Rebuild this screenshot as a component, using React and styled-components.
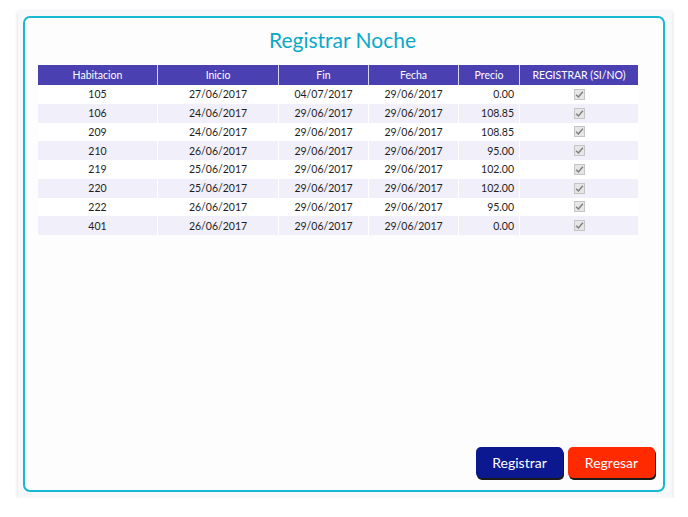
import React from "react";
import styled, { createGlobalStyle } from "styled-components";

const Global = createGlobalStyle`
  html, body { margin: 0; padding: 0; background: #ffffff; }
  body { font-family: Lato, "Open Sans", sans-serif; }
`;

const Page = styled.div`
  padding: 11px 0 0 18px;
`;

const Panel = styled.div`
  width: 654px;
  height: 487px;
  box-sizing: border-box;
  padding: 5px 7px 6px 5px;
  background: #f8f7f9;
  box-shadow: 0 1px 4px rgba(0, 0, 0, 0.16);
`;

const Frame = styled.div`
  height: 100%;
  box-sizing: border-box;
  border: 2px solid #16b8d2;
  border-radius: 7px;
  background: #fdfdfe;
  display: flex;
  flex-direction: column;
  padding: 0 8px 12px 13px;
`;

const Title = styled.h1`
  margin: 0;
  height: 47px;
  box-sizing: border-box;
  display: flex;
  align-items: center;
  justify-content: center;
  padding: 0 8px 5px 0;
  font-family: Lato, "Open Sans", sans-serif;
  font-weight: 400;
  font-size: 21px;
  color: #0aa9c9;
`;

const Table = styled.div`
  width: 600px;
  display: grid;
  grid-template-columns: 119px 121px 90px 90px 61px 119px;
  font-size: 10.5px;
`;

const HeadCell = styled.div`
  height: 20px;
  display: flex;
  align-items: center;
  justify-content: center;
  background: #4a40b2;
  color: #ffffff;
  border-left: ${(p) => (p.$first ? "none" : "1px solid #d8d6f0")};
`;

const Cell = styled.div`
  height: 18.75px;
  display: flex;
  align-items: center;
  justify-content: ${(p) => (p.$right ? "flex-end" : "center")};
  padding-right: ${(p) => (p.$right ? "5px" : "0")};
  background: ${(p) => (p.$alt ? "#f0effa" : "#ffffff")};
  border-left: ${(p) => (p.$first ? "none" : "1px solid #ffffff")};
  color: #1e1e1e;
`;

const Check = styled.span`
  width: 11px;
  height: 11px;
  box-sizing: border-box;
  border: 1px solid #c4c4c4;
  background: #e6e6e6;
  display: flex;
  align-items: center;
  justify-content: center;
`;

const Spacer = styled.div`
  flex: 1;
`;

const Buttons = styled.div`
  display: flex;
  justify-content: flex-end;
  gap: 5px;
`;

const Button = styled.button`
  width: 87px;
  height: 31px;
  border: none;
  border-radius: 5px;
  background: ${(p) => p.$bg};
  color: #ffffff;
  font-family: Lato, "Open Sans", sans-serif;
  font-size: 14px;
  box-shadow: 1px 2px 0 #1a1a1a;
  cursor: pointer;
`;

const rows = [
  ["105", "27/06/2017", "04/07/2017", "29/06/2017", "0.00"],
  ["106", "24/06/2017", "29/06/2017", "29/06/2017", "108.85"],
  ["209", "24/06/2017", "29/06/2017", "29/06/2017", "108.85"],
  ["210", "26/06/2017", "29/06/2017", "29/06/2017", "95.00"],
  ["219", "25/06/2017", "29/06/2017", "29/06/2017", "102.00"],
  ["220", "25/06/2017", "29/06/2017", "29/06/2017", "102.00"],
  ["222", "26/06/2017", "29/06/2017", "29/06/2017", "95.00"],
  ["401", "26/06/2017", "29/06/2017", "29/06/2017", "0.00"],
];

const headers = ["Habitacion", "Inicio", "Fin", "Fecha", "Precio", "REGISTRAR (SI/NO)"];

export default function App() {
  return (
    <>
      <Global />
      <Page>
        <Panel>
          <Frame>
            <Title>Registrar Noche</Title>
            <Table>
              {headers.map((h, i) => (
                <HeadCell key={h} $first={i === 0}>{h}</HeadCell>
              ))}
              {rows.map((r, ri) => (
                <React.Fragment key={ri}>
                  {r.map((v, ci) => (
                    <Cell key={ci} $alt={ri % 2 === 1} $first={ci === 0} $right={ci === 4}>
                      {v}
                    </Cell>
                  ))}
                  <Cell $alt={ri % 2 === 1}>
                    <Check>
                      <svg width="9" height="9" viewBox="0 0 8 8">
                        <path d="M1 4.2 L3 6.2 L7 1.6" fill="none" stroke="#7f7f7f" strokeWidth="1.3" />
                      </svg>
                    </Check>
                  </Cell>
                </React.Fragment>
              ))}
            </Table>
            <Spacer />
            <Buttons>
              <Button $bg="#0c1890">Registrar</Button>
              <Button $bg="#ff2a00">Regresar</Button>
            </Buttons>
          </Frame>
        </Panel>
      </Page>
    </>
  );
}
